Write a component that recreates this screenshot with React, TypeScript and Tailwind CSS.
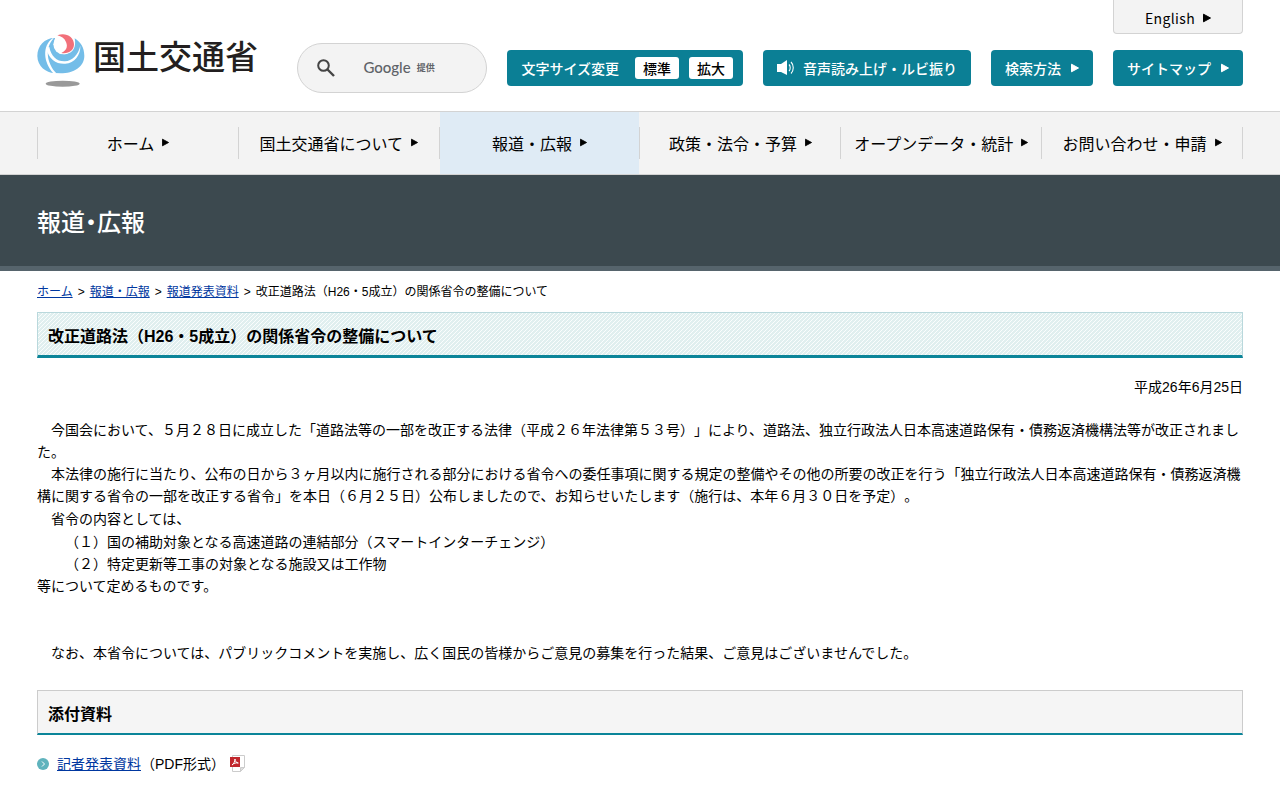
import React from "react";
import clsx from "clsx";

const navItems = [
  { label: "ホーム" },
  { label: "国土交通省について" },
  { label: "報道・広報", active: true },
  { label: "政策・法令・予算" },
  { label: "オープンデータ・統計" },
  { label: "お問い合わせ・申請" },
];

const crumbs = ["ホーム", "報道・広報", "報道発表資料"];

function Arrow({ className = "h-2.5 w-2" }: { className?: string }) {
  return (
    <svg viewBox="0 0 8 10" className={clsx("shrink-0", className)} aria-hidden="true">
      <path d="M.5 1.2v7.6L7.5 5z" fill="currentColor" stroke="currentColor" strokeWidth="1" strokeLinejoin="round" />
    </svg>
  );
}

function LogoMark() {
  return (
    <svg viewBox="50 41 144 159" className="h-[53px] w-12" aria-hidden="true">
      <path
        d="M104 53C74 52 51 76 51 107C51 139 80 159 103 158L121 159C160 159 192 139 192 106C192 82 181 65 163 54C168 80 160 98 134 102C110 101 99 78 104 53Z"
        fill="#74bde8"
      />
      <g fill="#fff">
        <path d="M97 54C64 77 70 128 99 159L108 159C80 130 72 84 100 54Z" />
        <path d="M78 82C84 118 110 132 135 130C163 128 181 104 180 76C173 105 155 121 134 123C110 124 92 108 87 80Z" />
        <circle cx="129" cy="72" r="30" />
      </g>
      <path d="M111 45C134 35 161 48 161 72C161 91 145 101 123 98C139 91 143 78 137 65C132 53 123 48 111 45Z" fill="#f2707a" />
      <ellipse cx="127" cy="190" rx="51" ry="9" fill="#999" />
    </svg>
  );
}

function SpeakerIcon() {
  return (
    <svg viewBox="0 0 18 16" className="h-4 w-[18px] shrink-0" aria-hidden="true">
      <path d="M0 4h4l6-4v15l-6-3H0z" fill="#fff" />
      <g fill="none" stroke="#fff" strokeWidth="1.1">
        <path d="M12 4.5c1.6 1.6 1.6 5 0 6.6" />
        <path d="M14 2c3 3 3 8.5 0 11.5" />
      </g>
    </svg>
  );
}

function PdfIcon() {
  return (
    <svg viewBox="0 0 16 18" className="h-[18px] w-4" role="img" aria-label="PDF">
      <path d="M2.5.5h12v12l-4 4h-8z" fill="#fff" stroke="#ccc" />
      <path d="M14.5 12.5h-4v4z" fill="#ddd" stroke="#ccc" />
      <path d="M0 2h10v10H0z" fill="#c1272d" />
      <path d="M2 10c1.5-1 3-3.5 3-6 0 2.5 1.5 3.8 3.3 4C6 7.6 4 8 2 10z" fill="none" stroke="#fff" strokeWidth="1" />
    </svg>
  );
}

function BulletIcon() {
  return (
    <svg viewBox="0 0 12 12" className="h-3 w-3 shrink-0" aria-hidden="true">
      <circle cx="6" cy="6" r="6" fill="#5fb3bd" />
      <path d="M5 3.5 7.5 6 5 8.5" fill="none" stroke="#fff" strokeWidth="1" />
    </svg>
  );
}

function Header() {
  return (
    <header className="flex justify-between px-[37px] pb-[18px] font-['Noto_Sans_CJK_JP',sans-serif]">
      <a href="#" className="flex items-start gap-2 pt-[34px] text-[33px] leading-[42px] font-medium text-[#231f20]">
        <LogoMark />
        国土交通省
      </a>

      <div className="flex flex-col items-end gap-[9px]">
        <a
          href="#"
          className="flex h-[34px] w-[130px] items-center justify-center gap-2 rounded-b border border-t-0 border-[#d3d3d3] bg-[#f3f3f3] pt-0.5 text-sm tracking-wide"
        >
          English
          <Arrow />
        </a>

        <div className="flex items-center gap-5 text-sm font-medium text-white">
          <form className="flex h-[50px] w-[190px] items-center rounded-full border border-[#d3d3d3] bg-[#f3f3f3] pl-[19px]">
            <button type="button" aria-label="検索" className="mr-7">
              <svg viewBox="0 0 18 18" className="h-[18px] w-[18px]" fill="none" stroke="#444" aria-hidden="true">
                <circle cx="6.5" cy="6.5" r="5.3" strokeWidth="2" />
                <path d="M10.5 10.5 17 17" strokeWidth="2.4" />
              </svg>
            </button>
            <label htmlFor="q" className="flex items-center gap-1.5 text-[#5f6368]">
              <span className="font-['Lato',sans-serif] text-[15px]">Google</span>
              <span className="text-[9px] font-bold">提供</span>
            </label>
            <input id="q" type="text" className="w-0 flex-1 bg-transparent text-sm text-black outline-none" />
          </form>

          <div className="flex h-9 items-center gap-2.5 rounded bg-[#0b7f95] pr-2.5 pl-3.5">
            <span className="mr-1.5">文字サイズ変更</span>
            <button type="button" className="h-[22px] w-11 rounded-[3px] bg-white text-black">標準</button>
            <button type="button" className="h-[22px] w-11 rounded-[3px] bg-white text-black">拡大</button>
          </div>

          <a href="#" className="flex h-9 items-center gap-2 rounded bg-[#0b7f95] px-3.5">
            <SpeakerIcon />
            音声読み上げ・ルビ振り
          </a>
          <a href="#" className="flex h-9 items-center gap-2.5 rounded bg-[#0b7f95] px-3.5">
            検索方法
            <Arrow />
          </a>
          <a href="#" className="flex h-9 items-center gap-2.5 rounded bg-[#0b7f95] px-3.5">
            サイトマップ
            <Arrow />
          </a>
        </div>
      </div>
    </header>
  );
}

function GlobalNav() {
  return (
    <nav className="border-y border-[#d3d3d3] bg-[#f3f3f3] px-[37px] font-['Noto_Sans_CJK_JP',sans-serif]">
      <div className="flex h-[62px] items-center">
        <span className="h-8 w-px bg-[#d3d3d3]" />
        {navItems.map((item) => (
          <React.Fragment key={item.label}>
            <a
              href="#"
              className={clsx(
                "flex h-full flex-1 items-center justify-center gap-2 pb-px text-base whitespace-nowrap",
                item.active && "bg-[#dfebf5]"
              )}
            >
              {item.label}
              <Arrow className="h-[9px] w-[7px]" />
            </a>
            <span className="h-8 w-px bg-[#d3d3d3]" />
          </React.Fragment>
        ))}
      </div>
    </nav>
  );
}

export default function App() {
  return (
    <div className="min-h-screen bg-white font-['Liberation_Sans','Noto_Sans_CJK_JP',sans-serif] text-black">
      <Header />
      <GlobalNav />

      <div className="flex h-24 items-center border-b-[5px] border-[#56646c] bg-[#3c494f] px-[37px]">
        <p className="font-['Noto_Sans_CJK_JP',sans-serif] text-2xl font-medium text-white [font-feature-settings:'palt']">報道・広報</p>
      </div>

      <main className="px-[37px] pb-6 text-sm leading-[22px] [text-spacing-trim:space-all]">
        {/* Breadcrumb */}
        <ol className="flex gap-[5px] pt-3 pb-2.5 text-xs leading-[19px]">
          {crumbs.map((c) => (
            <li key={c} className="flex gap-[5px]">
              <a href="#" className="text-[#0037a0] underline">{c}</a>
              <span>&gt;</span>
            </li>
          ))}
          <li>改正道路法（H26・5成立）の関係省令の整備について</li>
        </ol>

        <h1 className="border border-b-[3px] border-[#b9d8dc] border-b-[#0b8599] bg-[linear-gradient(135deg,#fafdfd_19%,#e0efef_19%,#e0efef_56%,#fafdfd_56%,#fafdfd_69%,#e0efef_69%)] bg-[length:4px_4px] px-2.5 pt-[11px] pb-[5px] text-base leading-[26px] font-bold">
          改正道路法（H26・5成立）の関係省令の整備について
        </h1>

        <p className="mt-[18px] text-right">平成26年6月25日</p>

        <div className="mt-[21px] space-y-px">
          <div>
            <p>　今国会において、５月２８日に成立した「道路法等の一部を改正する法律（平成２６年法律第５３号）」により、道路法、独立行政法人日本高速道路保有・債務返済機構法等が改正されました。</p>
            <p>　本法律の施行に当たり、公布の日から３ヶ月以内に施行される部分における省令への委任事項に関する規定の整備やその他の所要の改正を行う「独立行政法人日本高速道路保有・債務返済機構に関する省令の一部を改正する省令」を本日（６月２５日）公布しましたので、お知らせいたします（施行は、本年６月３０日を予定）。</p>
          </div>
          <p>　省令の内容としては、</p>
          <div>
            <p>　　（１）国の補助対象となる高速道路の連結部分（スマートインターチェンジ）</p>
            <p>　　（２）特定更新等工事の対象となる施設又は工作物</p>
            <p>等について定めるものです。</p>
          </div>
        </div>

        <p className="mt-[45px]">　なお、本省令については、パブリックコメントを実施し、広く国民の皆様からご意見の募集を行った結果、ご意見はございませんでした。</p>

        <h2 className="mt-[26px] border border-b-2 border-[#ccc] border-b-[#0b8599] bg-[#f5f5f5] px-2.5 pt-[11px] pb-[5px] text-base leading-[26px] font-bold">
          添付資料
        </h2>

        <ul className="mt-[18px]">
          <li className="flex items-center">
            <BulletIcon />
            <a href="#" className="ml-2 text-[#0037a0] underline">記者発表資料</a>
            <span className="mr-[5px]">（PDF形式）</span>
            <PdfIcon />
          </li>
        </ul>
      </main>
    </div>
  );
}
